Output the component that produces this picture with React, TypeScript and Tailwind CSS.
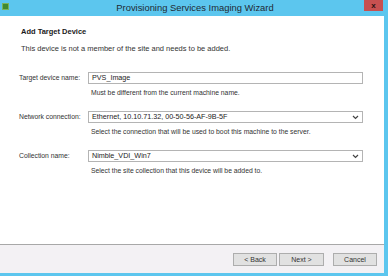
import React from "react";

const font = { fontFamily: '"Liberation Sans", Arial, sans-serif' };

const Chevron = () => (
  <svg width="7" height="5" viewBox="0 0 7 5" className="shrink-0">
    <path d="M1 1 L3.5 3.5 L6 1" fill="none" stroke="#444" strokeWidth="1.2" />
  </svg>
);

interface FieldProps {
  label: string;
  value: string;
  help: string;
  dropdown?: boolean;
}

const Field = ({ label, value, help, dropdown }: FieldProps) => (
  <div className="flex flex-col">
    <div className="flex items-center h-[12px]">
      <div className="w-[69px] text-[6.8px] text-[#333]">{label}</div>
      <div className="w-[275px] h-[12px] flex items-center justify-between border border-[#b4b4b4] bg-white pl-[3px] pr-[3px]">
        <span className="text-[7.2px] text-[#222] leading-none">{value}</span>
        {dropdown && <Chevron />}
      </div>
    </div>
    <div className="pl-[72px] mt-[4px] h-[10px] text-[6.8px] leading-[10px] text-[#333]">{help}</div>
  </div>
);

const App = () => {
  return (
    <div className="w-[388px] h-[276px] bg-[#5cc6ee] flex flex-col overflow-hidden" style={font}>
      <div className="h-[16px] flex items-start relative shrink-0">
        <div className="absolute left-[2px] top-[3px] w-[7px] h-[7px] bg-[#3f8a2e] border border-[#79b35a]" />
        <div className="flex-1 text-center text-[9.4px] leading-[15px] text-[#1f2a33] pl-[2px]">
          Provisioning Services Imaging Wizard
        </div>
        <div className="absolute left-[364px] top-0 w-[19px] h-[11px] bg-[#c75050] flex items-center justify-center">
          <span className="text-[8px] font-bold leading-none text-[#2a1010]">x</span>
        </div>
      </div>
      <div className="flex-1 mr-[4px] mb-[3px] bg-white flex flex-col">
        <div className="flex-1 flex flex-col pl-[19px] pt-[11px]">
          <div className="pl-[2px] text-[7.5px] font-bold leading-[10px] text-[#1a1a1a]">Add Target Device</div>
          <div className="pl-[2px] mt-[7px] text-[7.5px] leading-[10px] text-[#333]">
            This device is not a member of the site and needs to be added.
          </div>
          <div className="mt-[18px] flex flex-col gap-[13px]">
            <Field label="Target device name:" value="PVS_Image" help="Must be different from the current machine name." />
            <Field
              label="Network connection:"
              value="Ethernet, 10.10.71.32, 00-50-56-AF-9B-5F"
              help="Select the connection that will be used to boot this machine to the server."
              dropdown
            />
            <Field
              label="Collection name:"
              value="Nimble_VDI_Win7"
              help="Select the site collection that this device will be added to."
              dropdown
            />
          </div>
        </div>
        <div className="h-[29px] border-t border-[#a8a8a8] bg-[#f3f1f4] flex items-start justify-end pt-[8px] pr-[7px]">
          <button className="w-[44px] h-[13px] border border-[#adadad] bg-[#e1e1e1] text-[7px] leading-none text-[#333]">&lt; Back</button>
          <button className="ml-[2px] w-[45px] h-[13px] border border-[#adadad] bg-[#e1e1e1] text-[7px] leading-none text-[#333]">Next &gt;</button>
          <button className="ml-[9px] w-[44px] h-[13px] border border-[#adadad] bg-[#e1e1e1] text-[7px] leading-none text-[#333]">Cancel</button>
        </div>
      </div>
    </div>
  );
};

export default App;
